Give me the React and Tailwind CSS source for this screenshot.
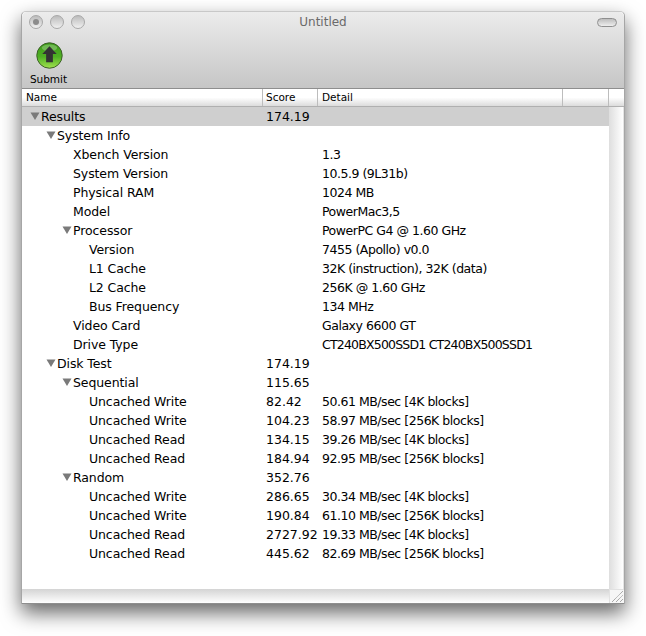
// App.jsx
const rows = [
    {name: 'Results', score: '174.19', detail: '', indent: 'pl-[8px]', open: true, head: true},
    {name: 'System Info', score: '', detail: '', indent: 'pl-[24px]', open: true},
    {name: 'Xbench Version', score: '', detail: '1.3', indent: 'pl-[51px]'},
    {name: 'System Version', score: '', detail: '10.5.9 (9L31b)', indent: 'pl-[51px]'},
    {name: 'Physical RAM', score: '', detail: '1024 MB', indent: 'pl-[51px]'},
    {name: 'Model', score: '', detail: 'PowerMac3,5', indent: 'pl-[51px]'},
    {name: 'Processor', score: '', detail: 'PowerPC G4 @ 1.60 GHz', indent: 'pl-[40px]', open: true},
    {name: 'Version', score: '', detail: '7455 (Apollo) v0.0', indent: 'pl-[67px]'},
    {name: 'L1 Cache', score: '', detail: '32K (instruction), 32K (data)', indent: 'pl-[67px]'},
    {name: 'L2 Cache', score: '', detail: '256K @ 1.60 GHz', indent: 'pl-[67px]'},
    {name: 'Bus Frequency', score: '', detail: '134 MHz', indent: 'pl-[67px]'},
    {name: 'Video Card', score: '', detail: 'Galaxy 6600 GT', indent: 'pl-[51px]'},
    {name: 'Drive Type', score: '', detail: 'CT240BX500SSD1 CT240BX500SSD1', indent: 'pl-[51px]', tight: true},
    {name: 'Disk Test', score: '174.19', detail: '', indent: 'pl-[24px]', open: true},
    {name: 'Sequential', score: '115.65', detail: '', indent: 'pl-[40px]', open: true},
    {name: 'Uncached Write', score: '82.42', detail: '50.61 MB/sec [4K blocks]', indent: 'pl-[67px]'},
    {name: 'Uncached Write', score: '104.23', detail: '58.97 MB/sec [256K blocks]', indent: 'pl-[67px]'},
    {name: 'Uncached Read', score: '134.15', detail: '39.26 MB/sec [4K blocks]', indent: 'pl-[67px]'},
    {name: 'Uncached Read', score: '184.94', detail: '92.95 MB/sec [256K blocks]', indent: 'pl-[67px]'},
    {name: 'Random', score: '352.76', detail: '', indent: 'pl-[40px]', open: true},
    {name: 'Uncached Write', score: '286.65', detail: '30.34 MB/sec [4K blocks]', indent: 'pl-[67px]'},
    {name: 'Uncached Write', score: '190.84', detail: '61.10 MB/sec [256K blocks]', indent: 'pl-[67px]'},
    {name: 'Uncached Read', score: '2727.92', detail: '19.33 MB/sec [4K blocks]', indent: 'pl-[67px]'},
    {name: 'Uncached Read', score: '445.62', detail: '82.69 MB/sec [256K blocks]', indent: 'pl-[67px]'},
];

// Кнопки светофора в заголовке окна
const Light = ({dot}) => (
    <div className="w-[14px] h-[14px] rounded-full border border-[#a8a8a8] bg-gradient-to-b from-[#bcbcbc] to-[#f0f0f0] flex items-center justify-center">
        {dot && <div className="w-[6px] h-[6px] rounded-full bg-[#8c8c8c]"/>}
    </div>
);

const Triangle = () => (
    <svg width="11" height="10" viewBox="0 0 11 10" className="shrink-0">
        <path d="M0.5 0.5 L9.5 0.5 L5 8 Z" fill="#7a7a7a"/>
    </svg>
);

const SubmitIcon = () => (
    <svg width="27" height="27" viewBox="0 0 28 28" className="ml-[2px]">
        <defs>
            <linearGradient id="ball" x1="0" y1="0" x2="0" y2="1">
                <stop offset="0" stopColor="#3c9a18"/>
                <stop offset="0.55" stopColor="#4fb024"/>
                <stop offset="1" stopColor="#a2e24e"/>
            </linearGradient>
        </defs>
        <circle cx="14" cy="14" r="13.2" fill="url(#ball)" stroke="#3a5c28" strokeWidth="1"/>
        <ellipse cx="14" cy="6" rx="8" ry="3.5" fill="#ffffff" opacity="0.25"/>
        <path d="M14 4.5 L21.5 12.5 L17.5 12.5 L17.5 21 L10.5 21 L10.5 12.5 L6.5 12.5 Z" fill="#333333"/>
    </svg>
);

const HeaderCell = ({className, children}) => (
    <div className={`h-full border-r border-[#bdbdbd] text-[10.5px] leading-[17px] text-black ${className}`}>
        {children}
    </div>
);

const App = () => {
    return (
        <div className="w-[646px] h-[636px] bg-white pl-[21px] pt-[11px] overflow-hidden font-['DejaVu_Sans',sans-serif]">
            <div className="relative w-[604px] h-[593px] flex flex-col rounded-t-[5px] border-x border-[#a6a6a6] border-t-[#c8c8c8] border-t shadow-[0_9px_20px_rgba(0,0,0,0.6)] bg-white">
                {/* Заголовок и тулбар */}
                <div className="h-[77px] shrink-0 rounded-t-[5px] bg-gradient-to-b from-[#ececec] to-[#c6c6c6] border-b border-[#8e8e8e] relative">
                    <div className="flex items-center justify-between h-[20px] pl-[7px] pr-[7px]">
                        <div className="flex gap-[7px]">
                            <Light dot/>
                            <Light/>
                            <Light/>
                        </div>
                        <div className="w-[20px] h-[9px] rounded-full border border-[#8f8f8f] bg-gradient-to-b from-[#bdbdbd] to-[#eeeeee]"/>
                    </div>
                    <div className="absolute top-[3px] left-0 right-0 text-center text-[12px] leading-[14px] text-[#6a6a6a]">Untitled</div>
                    <div className="flex flex-col items-center w-[52px] pl-[1px] mt-[10px]">
                        <SubmitIcon/>
                        <div className="text-[10.5px] leading-[13px] mt-[4px] text-black">Submit</div>
                    </div>
                </div>

                {/* Шапка таблицы */}
                <div className="h-[18px] shrink-0 flex border-b border-[#b0b0b0] bg-gradient-to-b from-white via-[#ffffff] to-[#dcdcdc]">
                    <HeaderCell className="w-[241px] pl-[4px]">Name</HeaderCell>
                    <HeaderCell className="w-[55px] pl-[3px]">Score</HeaderCell>
                    <HeaderCell className="w-[245px] pl-[4px]">Detail</HeaderCell>
                    <HeaderCell className="w-[46px]"/>
                    <div className="flex-1"/>
                </div>

                {/* Строки */}
                <div className="flex-1 flex min-h-0">
                    <div className="w-[587px] shrink-0">
                        {rows.map((row, i) => (
                            <div key={i} className={`flex h-[19px] items-center text-[12.5px] leading-[19px] text-black ${row.head ? 'bg-[#cfcfcf]' : ''}`}>
                                <div className={`w-[241px] flex items-center shrink-0 tracking-[-0.1px] ${row.indent}`}>
                                    {row.open && <Triangle/>}
                                    <span>{row.name}</span>
                                </div>
                                <div className="w-[56px] shrink-0 pl-[3px] whitespace-nowrap">{row.score}</div>
                                <div className={`pl-[3px] whitespace-nowrap ${row.tight ? 'tracking-[-0.8px]' : 'tracking-[-0.47px]'}`}>{row.detail}</div>
                            </div>
                        ))}
                    </div>
                    <div className="flex-1 bg-gradient-to-r from-[#dedede] to-[#ffffff] border-r border-[#e4e4e4]"/>
                </div>

                {/* Нижний скроллбар */}
                <div className="h-[15px] shrink-0 flex border-b border-[#8e8e8e]">
                    <div className="flex-1 bg-gradient-to-b from-[#d4d4d4] to-[#ffffff]"/>
                    <div className="w-[15px] bg-[#f6f6f6] border-l border-t border-[#e2e2e2] flex items-end justify-end">
                        <svg width="13" height="13" viewBox="0 0 13 13">
                            <path d="M1 12 L12 1 M5 12 L12 5 M9 12 L12 9" stroke="#8a8a8a" strokeWidth="1" strokeDasharray="1 0.6" fill="none"/>
                        </svg>
                    </div>
                </div>
            </div>
        </div>
    );
};

export default App;
